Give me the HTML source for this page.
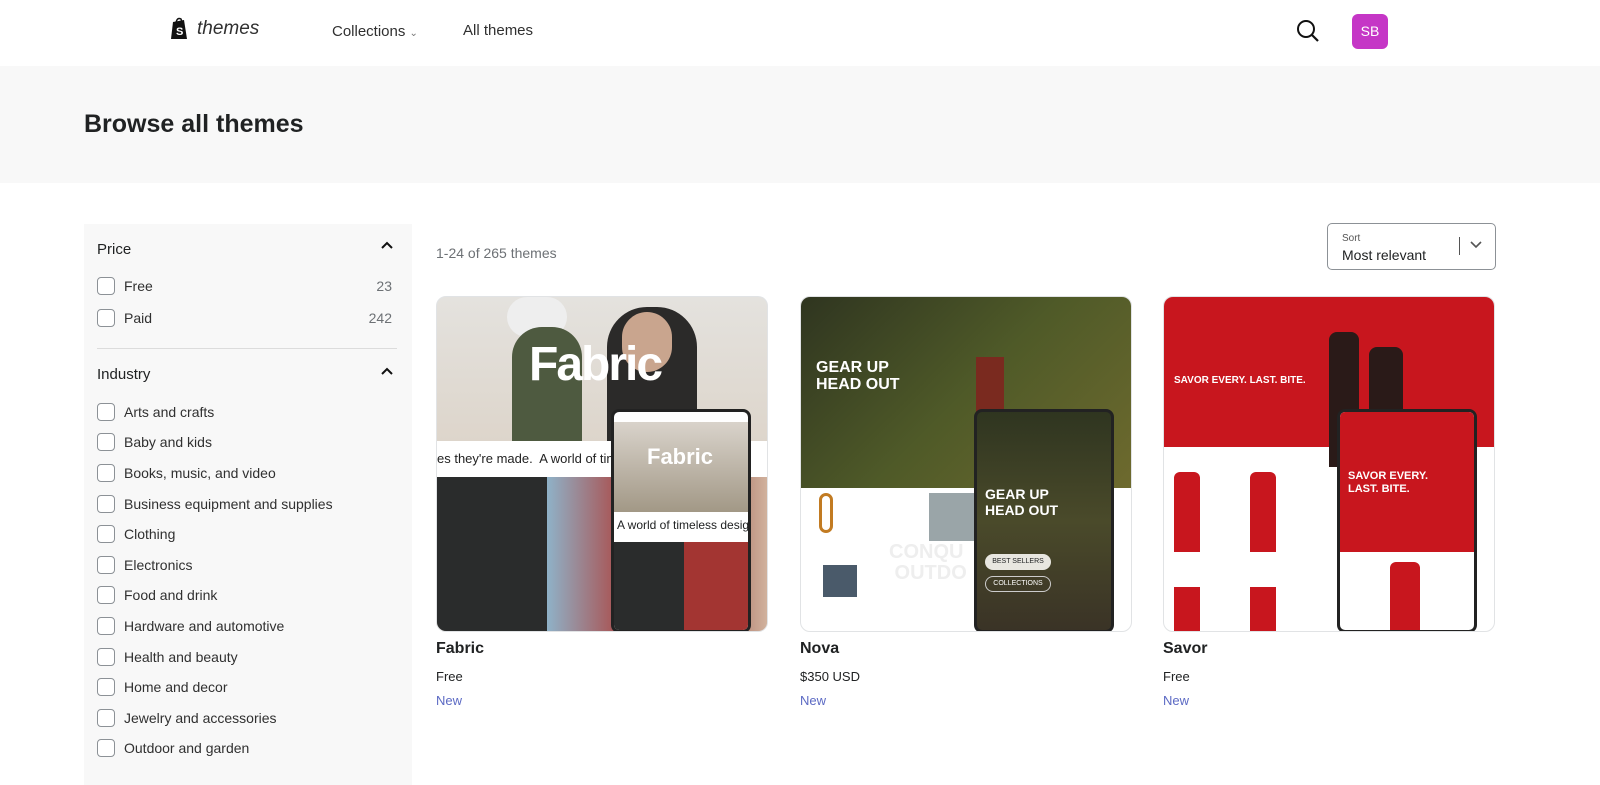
<!DOCTYPE html>
<html><head><meta charset="utf-8"><style>
*{box-sizing:border-box;margin:0;padding:0}
body{width:1600px;height:785px;overflow:hidden;background:#fff;font-family:"Liberation Sans",sans-serif;color:#202223;position:relative}
.abs{position:absolute}
.nav{font-size:15px;color:#303030}
.hero{position:absolute;left:0;top:66px;width:1600px;height:117px;background:#f8f8f8}
.side{position:absolute;left:84px;top:224px;width:328px;height:561px;background:#f8f8f8}
.cb{position:absolute;left:13px;width:18px;height:18px;border:1px solid #8c9196;border-radius:4px;background:#fff}
.lab{position:absolute;left:40px;font-size:14px;color:#303030}
.cnt{position:absolute;right:20px;font-size:14px;color:#6d7175}
.card{position:absolute;top:296px;width:332px;height:336px;border-radius:10px;overflow:hidden;border:1px solid #e1e3e5}
.phone{position:absolute;top:112px;width:140px;height:224px;border-radius:8px;border:3px solid #222;overflow:hidden}
.tt{position:absolute;top:640px;font-size:16px;font-weight:bold}
.pr{position:absolute;top:669px;font-size:13px}
.nw{position:absolute;top:693px;font-size:13px;color:#5c6ac4}
</style></head><body>
<svg class="abs" style="left:170px;top:17px" width="20" height="24" viewBox="0 0 20 24"><path d="M3 5 L14 3 L17 22 L1 22 Z" fill="#111"/><path d="M6 6 Q7 0 11 2 L12 5" stroke="#111" stroke-width="1.5" fill="none"/><text x="6" y="18" fill="#fff" font-size="11" font-weight="bold" font-family="Liberation Sans">S</text></svg>
<div class="abs" style="left:197px;top:18px;font-size:19px;font-style:italic;color:#303030">themes</div>
<div class="abs nav" style="left:332px;top:23px">Collections <span style="font-size:10px;color:#777">⌄</span></div>
<div class="abs nav" style="left:463px;top:22px">All themes</div>
<svg class="abs" style="left:1296px;top:19px" width="26" height="26" viewBox="0 0 26 26"><circle cx="10" cy="10" r="8" stroke="#111" stroke-width="2" fill="none"/><path d="M16 16 L22 22" stroke="#111" stroke-width="2.2"/></svg>
<div class="abs" style="left:1352px;top:14px;width:36px;height:35px;border-radius:6px;background:#c536c6;color:#fff;font-size:14px;text-align:center;line-height:35px">SB</div>
<div class="hero"><div class="abs" style="left:84px;top:44px;font-size:25px;font-weight:600;color:#202223">Browse all themes</div></div>
<div class="side">
 <div class="abs" style="left:13px;top:17px;font-size:15px">Price</div>
 <svg class="abs" style="left:297px;top:17px" width="12" height="10"><path d="M1 7 L6 2 L11 7" stroke="#111" stroke-width="2" fill="none"/></svg>
 <div class="cb" style="top:53px"></div><div class="lab" style="top:54px">Free</div><div class="cnt" style="top:54px">23</div>
 <div class="cb" style="top:85px"></div><div class="lab" style="top:86px">Paid</div><div class="cnt" style="top:86px">242</div>
 <div class="abs" style="left:13px;top:124px;width:300px;height:1px;background:#dcdcdc"></div>
 <div class="abs" style="left:13px;top:142px;font-size:15px">Industry</div>
 <svg class="abs" style="left:297px;top:143px" width="12" height="10"><path d="M1 7 L6 2 L11 7" stroke="#111" stroke-width="2" fill="none"/></svg>
 <div class="cb" style="top:179px"></div><div class="lab" style="top:180px">Arts and crafts</div>
 <div class="cb" style="top:209px"></div><div class="lab" style="top:210px">Baby and kids</div>
 <div class="cb" style="top:240px"></div><div class="lab" style="top:241px">Books, music, and video</div>
 <div class="cb" style="top:271px"></div><div class="lab" style="top:272px">Business equipment and supplies</div>
 <div class="cb" style="top:301px"></div><div class="lab" style="top:302px">Clothing</div>
 <div class="cb" style="top:332px"></div><div class="lab" style="top:333px">Electronics</div>
 <div class="cb" style="top:362px"></div><div class="lab" style="top:363px">Food and drink</div>
 <div class="cb" style="top:393px"></div><div class="lab" style="top:394px">Hardware and automotive</div>
 <div class="cb" style="top:424px"></div><div class="lab" style="top:425px">Health and beauty</div>
 <div class="cb" style="top:454px"></div><div class="lab" style="top:455px">Home and decor</div>
 <div class="cb" style="top:485px"></div><div class="lab" style="top:486px">Jewelry and accessories</div>
 <div class="cb" style="top:515px"></div><div class="lab" style="top:516px">Outdoor and garden</div>
</div>
<div class="abs" style="left:436px;top:245px;font-size:14px;color:#6d7175">1-24 of 265 themes</div>
<div class="abs" style="left:1327px;top:223px;width:169px;height:47px;border:1px solid #8c9196;border-radius:5px;background:#fff">
 <div class="abs" style="left:14px;top:9px;font-size:10px;color:#555">Sort</div>
 <div class="abs" style="left:14px;top:23px;font-size:14px">Most relevant</div>
 <div class="abs" style="left:131px;top:13px;width:1px;height:18px;background:#555"></div>
 <svg class="abs" style="left:142px;top:17px" width="12" height="8"><path d="M1 1 L6 6 L11 1" stroke="#555" stroke-width="1.6" fill="none"/></svg>
</div>
<!-- Fabric -->
<div class="card" style="left:436px;background:linear-gradient(180deg,#e4e2de 0%,#dcd3c8 50%,#c9b8a5)">
 <div class="abs" style="left:70px;top:0;width:60px;height:40px;background:#eee;border-radius:20px"></div>
 <div class="abs" style="left:75px;top:30px;width:70px;height:114px;background:#4e5a40;border-radius:30px 30px 0 0"></div>
 <div class="abs" style="left:170px;top:10px;width:90px;height:134px;background:#2b2a29;border-radius:40px 40px 0 0"></div>
 <div class="abs" style="left:185px;top:15px;width:50px;height:60px;background:#c9a58e;border-radius:25px"></div>
 <div class="abs" style="left:92px;top:40px;font-size:48px;font-weight:bold;color:#fff;letter-spacing:-2px">Fabric</div>
 <div class="abs" style="left:0;top:144px;width:332px;height:36px;background:#fff;font-size:13px;line-height:36px;white-space:nowrap;color:#222">es they're made.&nbsp; A world of timeless desig</div>
 <div class="abs" style="left:0;top:180px;width:110px;height:156px;background:#2a2c2c"></div>
 <div class="abs" style="left:110px;top:180px;width:222px;height:156px;background:linear-gradient(90deg,#8fb2c8,#b03a34 40%,#7a2a26 60%,#d3b5a0)"></div>
 <div class="phone" style="left:174px;background:#fff">
  <div class="abs" style="left:0;top:10px;width:140px;height:90px;background:linear-gradient(#d9d3cb,#a29886)"></div>
  <div class="abs" style="left:33px;top:32px;font-size:22px;font-weight:bold;color:#fff">Fabric</div>
  <div class="abs" style="left:3px;top:106px;font-size:12px;white-space:nowrap">A world of timeless desig</div>
  <div class="abs" style="left:0;top:130px;width:70px;height:94px;background:#2a2c2c"></div>
  <div class="abs" style="left:70px;top:130px;width:70px;height:94px;background:#a33532"></div>
 </div>
</div>
<div class="tt" style="left:436px">Fabric</div><div class="pr" style="left:436px">Free</div><div class="nw" style="left:436px">New</div>
<!-- Nova -->
<div class="card" style="left:800px;background:#fff">
 <div class="abs" style="left:0;top:0;width:332px;height:191px;background:linear-gradient(135deg,#2f3520,#4f5a28 50%,#6e6a2e)"></div>
 <div class="abs" style="left:15px;top:62px;font-size:16px;font-weight:bold;color:#fff;line-height:17px">GEAR UP<br>HEAD OUT</div>
 <div class="abs" style="left:175px;top:60px;width:28px;height:60px;background:#7a2a1f"></div>
 <div class="abs" style="left:18px;top:196px;width:14px;height:40px;border:3px solid #c27b22;border-radius:7px"></div>
 <div class="abs" style="left:128px;top:196px;width:45px;height:48px;background:#9aa5a8"></div>
 <div class="abs" style="left:22px;top:268px;width:34px;height:32px;background:#4a5a6a"></div>
 <div class="abs" style="left:88px;top:245px;font-size:20px;font-weight:bold;color:#eee;line-height:21px">CONQU<br>&nbsp;OUTDO</div>
 <div class="phone" style="left:173px;background:linear-gradient(#2f3520,#4a4a2a 50%,#3a3326)">
  <div class="abs" style="left:8px;top:74px;font-size:14px;font-weight:bold;color:#fff;line-height:16px">GEAR UP<br>HEAD OUT</div>
  <div class="abs" style="left:8px;top:142px;width:66px;height:16px;border-radius:8px;background:#e8e6e0;font-size:7px;text-align:center;line-height:16px">BEST SELLERS</div>
  <div class="abs" style="left:8px;top:164px;width:66px;height:16px;border-radius:8px;border:1px solid #ccc;font-size:7px;color:#fff;text-align:center;line-height:14px">COLLECTIONS</div>
 </div>
</div>
<div class="tt" style="left:800px">Nova</div><div class="pr" style="left:800px">$350 USD</div><div class="nw" style="left:800px">New</div>
<!-- Savor -->
<div class="card" style="left:1163px;background:#fff">
 <div class="abs" style="left:0;top:0;width:332px;height:150px;background:#c8161e"></div>
 <div class="abs" style="left:10px;top:78px;font-size:10px;font-weight:bold;color:#fff">SAVOR EVERY. LAST. BITE.</div>
 <div class="abs" style="left:165px;top:35px;width:30px;height:135px;background:#2a1a18;border-radius:8px 8px 0 0"></div>
 <div class="abs" style="left:205px;top:50px;width:34px;height:120px;background:#2a1a18;border-radius:8px 8px 0 0"></div>
 <div class="abs" style="left:10px;top:175px;width:26px;height:80px;background:#c8161e;border-radius:6px 6px 0 0"></div>
 <div class="abs" style="left:86px;top:175px;width:26px;height:80px;background:#c8161e;border-radius:6px 6px 0 0"></div>
 <div class="abs" style="left:10px;top:290px;width:26px;height:46px;background:#c8161e"></div>
 <div class="abs" style="left:86px;top:290px;width:26px;height:46px;background:#c8161e"></div>
 <div class="phone" style="left:173px;background:#fff">
  <div class="abs" style="left:0;top:0;width:140px;height:140px;background:#c8161e"></div>
  <div class="abs" style="left:8px;top:58px;font-size:11px;font-weight:bold;color:#fff;line-height:13px">SAVOR EVERY.<br>LAST. BITE.</div>
  <div class="abs" style="left:50px;top:150px;width:30px;height:74px;background:#c8161e;border-radius:6px 6px 0 0"></div>
 </div>
</div>
<div class="tt" style="left:1163px">Savor</div><div class="pr" style="left:1163px">Free</div><div class="nw" style="left:1163px">New</div>
</body></html>
